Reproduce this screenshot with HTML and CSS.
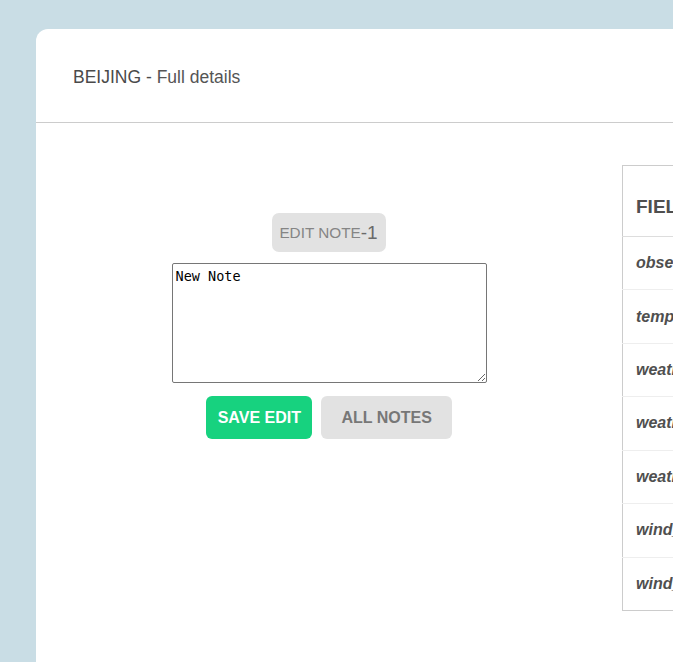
FILE: index.html
```html
<!DOCTYPE html>
<html>
<head>
<meta charset="utf-8">
<link rel="stylesheet" href="styles.css">
</head>
<body>
<div class="card">
  <div class="card-header">
    <span class="city">BEIJING</span> - <span class="sub">Full details</span>
  </div>
  <div class="card-body">
    <div class="notes">
      <div class="badge">EDIT NOTE<span class="num">-1</span></div>
      <textarea class="note-input">New Note</textarea>
      <div class="actions">
        <button class="btn btn-save">SAVE EDIT</button>
        <button class="btn btn-all">ALL NOTES</button>
      </div>
    </div>
    <div class="details">
      <table class="table">
        <thead>
          <tr><th>FIELD</th><th>VALUE</th></tr>
        </thead>
        <tbody>
          <tr><td>observation_time</td><td>08:15 AM</td></tr>
          <tr><td>temperature</td><td>12</td></tr>
          <tr><td>weather_code</td><td>113</td></tr>
          <tr><td>weather_icons</td><td>icon</td></tr>
          <tr><td>weather_descriptions</td><td>Sunny</td></tr>
          <tr><td>wind_speed</td><td>9</td></tr>
          <tr><td>wind_degree</td><td>340</td></tr>
        </tbody>
      </table>
    </div>
  </div>
</div>
</body>
</html>
```
FILE: styles.css
```css
html, body {
  margin: 0;
  padding: 0;
  overflow: hidden;
}
body {
  background: #c9dde5;
  font-family: "Liberation Sans", Arial, sans-serif;
  padding: 29px 0 0 36px;
  height: 662px;
  box-sizing: border-box;
}
.card {
  width: 1172px;
  min-height: 700px;
  background: #fff;
  border-radius: 12px 12px 0 0;
}
.card-header {
  height: 94px;
  box-sizing: border-box;
  border-bottom: 1px solid #cccccc;
  padding: 38px 0 0 37px;
  font-size: 17.5px;
  line-height: 20px;
  color: #4a4a4a;
}
.card-header .sub {
  color: #555;
}
.card-body {
  display: grid;
  grid-template-columns: 586px 1fr;
  padding-top: 42px;
}
.notes {
  display: flex;
  flex-direction: column;
  align-items: center;
  padding-top: 48px;
}
.badge {
  background: #e2e2e2;
  border-radius: 7px;
  height: 39px;
  box-sizing: border-box;
  padding: 0 8px 0 7px;
  display: flex;
  align-items: center;
  font-size: 15.3px;
  color: #858585;
}
.badge .num {
  font-size: 19px;
  color: #6a6a6a;
}
.note-input {
  display: block;
  margin-top: 11px;
  width: 315px;
  height: 120px;
  box-sizing: border-box;
  border: 1px solid #767676;
  border-radius: 2px;
  padding: 4px 3px;
  font-family: "DejaVu Sans Mono", monospace;
  font-size: 13.5px;
  color: #000;
  resize: both;
}
.actions {
  display: flex;
  gap: 9px;
  margin-top: 13px;
}
.btn {
  border: none;
  border-radius: 6px;
  height: 43px;
  font-family: "Liberation Sans", Arial, sans-serif;
  font-weight: bold;
  font-size: 16px;
  cursor: pointer;
}
.btn-save {
  background: #17d27f;
  color: #fff;
  padding: 0 11.5px;
}
.btn-all {
  background: #e2e2e2;
  color: #777;
  padding: 0 20px;
}
.table {
  border-collapse: collapse;
  border: 1px solid #cccccc;
  width: 520px;
  color: #4f4f4f;
}
.table thead tr {
  height: 71px;
}
.table th {
  text-align: left;
  font-size: 19px;
  font-weight: bold;
  padding: 11px 13px 0 13px;
  line-height: 19px;
  vertical-align: middle;
  border-bottom: 1px solid #dddddd;
}
.table tbody tr {
  height: 53.43px;
}
.table td {
  font-size: 16px;
  font-weight: bold;
  font-style: italic;
  padding: 0 13px;
  line-height: 18px;
  vertical-align: middle;
  border-bottom: 1px solid #eeeeee;
}
.table tbody tr:last-child td {
  border-bottom: none;
}
```
